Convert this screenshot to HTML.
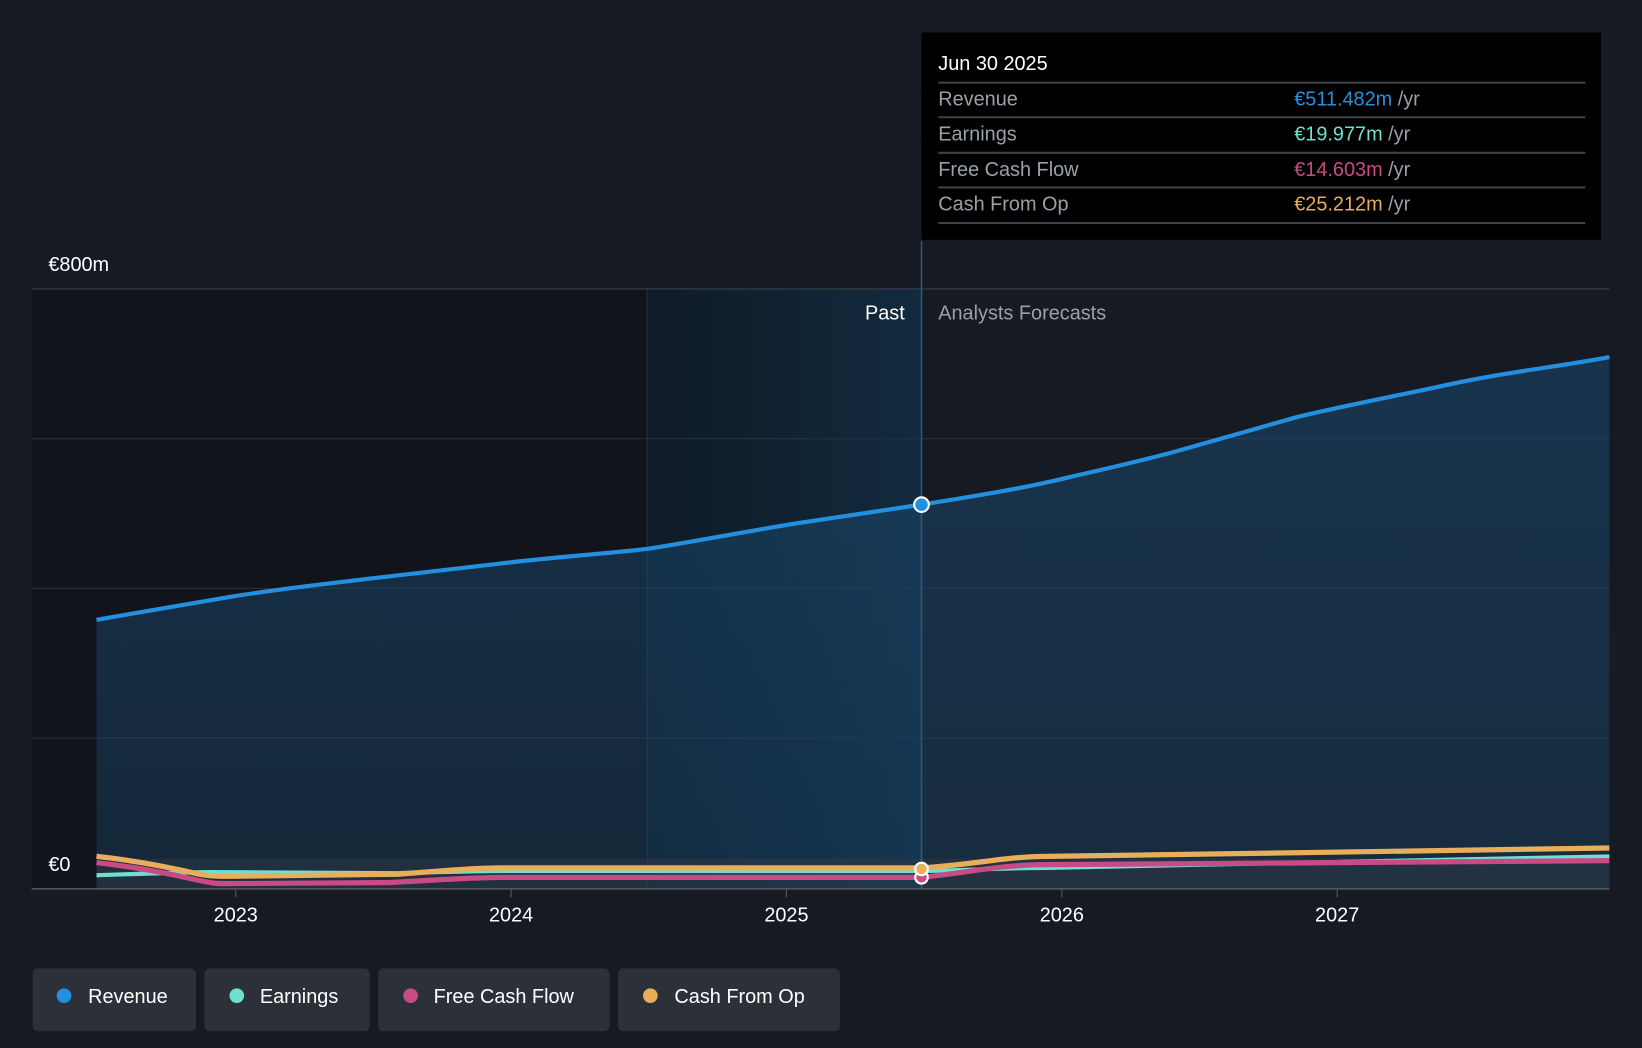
<!DOCTYPE html>
<html><head><meta charset="utf-8"><style>
html,body{margin:0;padding:0;background:#151a23;}
svg{display:block;font-family:"Liberation Sans",sans-serif;}
</style></head><body>
<svg width="1642" height="1048" viewBox="0 0 1568 1001" xmlns="http://www.w3.org/2000/svg">
<defs>
<linearGradient id="pastg" x1="0" x2="1" y1="0" y2="0">
<stop offset="0" stop-color="#0f1b26"/><stop offset="1" stop-color="#122a3e"/>
</linearGradient>
<linearGradient id="areag" x1="0" x2="0" y1="0" y2="1">
<stop offset="0" stop-color="#1a4a70" stop-opacity="0.55"/><stop offset="1" stop-color="#1a4a70" stop-opacity="0.35"/>
</linearGradient>
</defs>
<rect width="1568" height="1001" fill="#151a23"/>
<rect x="30" y="276" width="588" height="573" fill="#11141b"/>
<rect x="618" y="276" width="262" height="573" fill="url(#pastg)"/>
<line x1="618" y1="276" x2="618" y2="849" stroke="#1f3244" stroke-width="1"/>
<line x1="30" y1="276" x2="1537" y2="276" stroke="#3a404a" stroke-width="1"/>
<line x1="30" y1="419" x2="1537" y2="419" stroke="#2a303a" stroke-width="1"/>
<line x1="30" y1="562" x2="1537" y2="562" stroke="#2a303a" stroke-width="1"/>
<line x1="30" y1="705" x2="1537" y2="705" stroke="#2a303a" stroke-width="1"/>
<path d="M92,592 C150,582 190,575 220,570 C270,562 310,558 350,553 C400,547 440,543 480,538 C540,531 590,528 620,524 C670,516 710,508 760,500 C800,494 840,488 880,482 C930,474 980,466 1020,456 C1060,447 1090,440 1120,432 C1160,421 1200,409 1240,398 C1290,386 1330,379 1380,368 C1440,355 1490,350 1537,341 L1537,849 L92,849 Z" fill="url(#areag)"/>
<rect x="92" y="820" width="1445" height="29" fill="#3a3f48" opacity="0.35"/>
<line x1="30" y1="849" x2="1537" y2="849" stroke="#555b64" stroke-width="1.5"/>
<path d="M92,592 C150,582 190,575 220,570 C270,562 310,558 350,553 C400,547 440,543 480,538 C540,531 590,528 620,524 C670,516 710,508 760,500 C800,494 840,488 880,482 C930,474 980,466 1020,456 C1060,447 1090,440 1120,432 C1160,421 1200,409 1240,398 C1290,386 1330,379 1380,368 C1440,355 1490,350 1537,341" fill="none" stroke="#2390df" stroke-width="4"/>
<path d="M92,836 C150,834 180,833 200,833 L380,834 C420,833 450,832 480,832 L880,832 C930,831 960,829 1000,829 L1537,818" fill="none" stroke="#6fe0cf" stroke-width="4"/>
<path d="M92,824 C130,828 160,834 190,841 C200,843 205,844 215,844 L370,843 C410,841 450,838 480,838 L880,838 C920,834 950,827 990,826 L1537,822" fill="none" stroke="#c84b85" stroke-width="5"/>
<path d="M92,818 C130,822 160,828 190,835 C200,837 210,837 220,837 L380,835 C420,832 450,829 480,829 L880,829 C930,826 960,818 1000,818 L1537,810" fill="none" stroke="#e8ae5c" stroke-width="5"/>
<line x1="880" y1="230" x2="880" y2="849" stroke="#2a5a80" stroke-width="1.5"/>
<circle cx="880" cy="482" r="7" fill="#2390df" stroke="#fff" stroke-width="2"/>
<circle cx="880" cy="838" r="6" fill="#c84b85" stroke="#fff" stroke-width="2"/>
<circle cx="880" cy="830" r="6" fill="#e8ae5c" stroke="#fff" stroke-width="2"/>
<text x="46" y="259" fill="#fff" font-size="19">€800m</text>
<text x="46" y="832" fill="#fff" font-size="19">€0</text>
<text x="864" y="305" fill="#fff" font-size="19" text-anchor="end">Past</text>
<text x="896" y="305" fill="#9aa0a8" font-size="19">Analysts Forecasts</text>
<g fill="#fff" font-size="19" text-anchor="middle">
<line x1="225" y1="849" x2="225" y2="857" stroke="#555b64"/><text x="225" y="880">2023</text>
<line x1="488" y1="849" x2="488" y2="857" stroke="#555b64"/><text x="488" y="880">2024</text>
<line x1="751" y1="849" x2="751" y2="857" stroke="#555b64"/><text x="751" y="880">2025</text>
<line x1="1014" y1="849" x2="1014" y2="857" stroke="#555b64"/><text x="1014" y="880">2026</text>
<line x1="1277" y1="849" x2="1277" y2="857" stroke="#555b64"/><text x="1277" y="880">2027</text>
</g>
<rect x="880" y="31" width="649" height="198" fill="#000"/>
<text x="896" y="67" fill="#fff" font-size="19">Jun 30 2025</text>
<g stroke="#3e4248" stroke-width="2">
<line x1="896" y1="79" x2="1514" y2="79"/><line x1="896" y1="112" x2="1514" y2="112"/>
<line x1="896" y1="146" x2="1514" y2="146"/><line x1="896" y1="179" x2="1514" y2="179"/>
<line x1="896" y1="213" x2="1514" y2="213"/>
</g>
<g font-size="19" fill="#9aa0a8">
<text x="896" y="101">Revenue</text><text x="896" y="134">Earnings</text>
<text x="896" y="168">Free Cash Flow</text><text x="896" y="201">Cash From Op</text>
</g>
<g font-size="19">
<text x="1236" y="101"><tspan fill="#2390df">€511.482m</tspan><tspan fill="#9aa0a8"> /yr</tspan></text>
<text x="1236" y="134"><tspan fill="#6fe0cf">€19.977m</tspan><tspan fill="#9aa0a8"> /yr</tspan></text>
<text x="1236" y="168"><tspan fill="#c84b85">€14.603m</tspan><tspan fill="#9aa0a8"> /yr</tspan></text>
<text x="1236" y="201"><tspan fill="#e8ae5c">€25.212m</tspan><tspan fill="#9aa0a8"> /yr</tspan></text>
</g>
<g font-size="19" fill="#fff">
<rect x="31" y="925" width="156" height="60" rx="5" fill="#2c3039"/>
<circle cx="61" cy="951" r="7" fill="#2390df"/><text x="84" y="958">Revenue</text>
<rect x="195" y="925" width="158" height="60" rx="5" fill="#2c3039"/>
<circle cx="226" cy="951" r="7" fill="#6fe0cf"/><text x="248" y="958">Earnings</text>
<rect x="361" y="925" width="221" height="60" rx="5" fill="#2c3039"/>
<circle cx="392" cy="951" r="7" fill="#c84b85"/><text x="414" y="958">Free Cash Flow</text>
<rect x="590" y="925" width="212" height="60" rx="5" fill="#2c3039"/>
<circle cx="621" cy="951" r="7" fill="#e8ae5c"/><text x="644" y="958">Cash From Op</text>
</g>
</svg>
</body></html>
